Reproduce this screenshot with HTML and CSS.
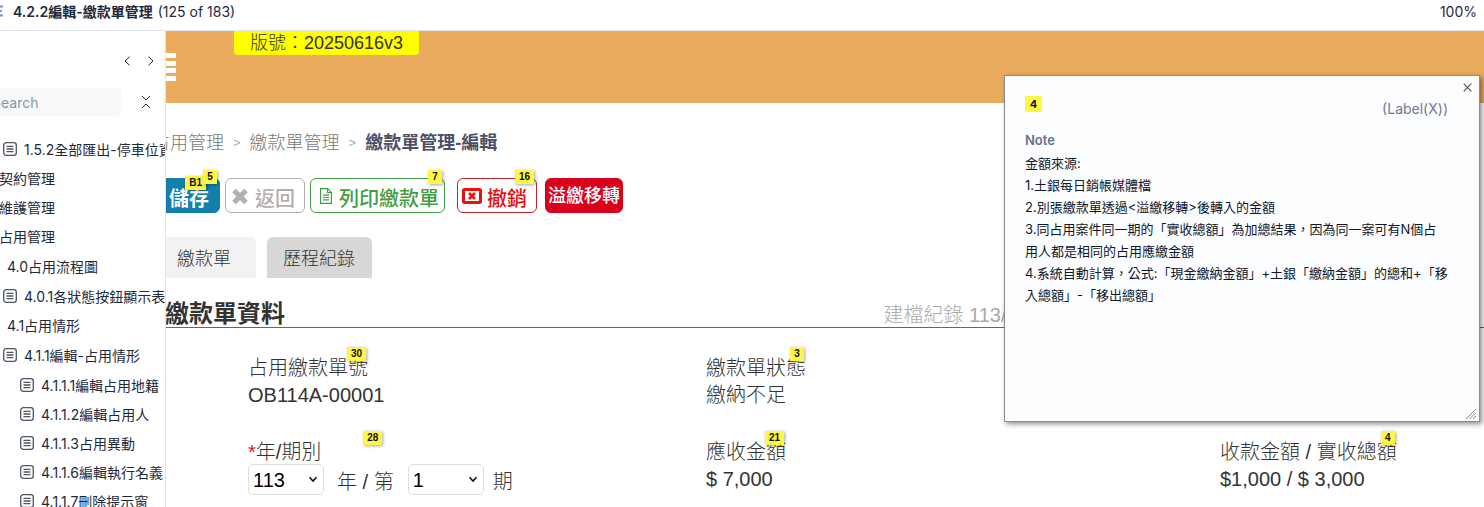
FILE: index.html
```html
<!DOCTYPE html>
<html lang="zh-Hant">
<head>
<meta charset="utf-8">
<title>4.2.2編輯-繳款單管理</title>
<link rel="stylesheet" href="styles.css">
</head>
<body>
<svg class="defs" aria-hidden="true">
  <symbol id="page" viewBox="0 0 14 14"><rect x="0.7" y="0.7" width="12.6" height="12.6" rx="2.6"/><path d="M3.5 4.4h7M3.5 7h7M3.5 9.6h7"/></symbol>
</svg>
<header class="topbar">
  <svg class="menu-mark" viewBox="0 0 12 12" aria-hidden="true"><path d="M0 1.5h12M0 6h11M0 10.5h12"/></svg>
  <h1 class="doc-title">4.2.2編輯-繳款單管理</h1>
  <span class="doc-count">(125 of 183)</span>
  <span class="zoom-level">100%</span>
</header>
<div class="workspace">
  <nav class="sidebar" aria-label="Pages">
    <div class="pager">
      <button class="icon-btn" aria-label="Previous"><svg width="8" height="10" viewBox="0 0 8 10"><path d="M6.5 0.7 2 5l4.500 4.300"/></svg></button>
      <button class="icon-btn" aria-label="Next"><svg width="8" height="10" viewBox="0 0 8 10"><path d="M1.500 0.700 6 5 1.500 9.300"/></svg></button>
    </div>
    <div class="search-row">
      <input class="search" type="text" placeholder="Search" aria-label="Search">
      <button class="icon-btn" aria-label="Collapse all"><svg width="10" height="14" viewBox="0 0 10 14"><path d="M1 1l4 4 4-4M1 13l4-4 4 4"/></svg></button>
    </div>
    <ul class="tree">
      <li><a class="node with-icon" href="#"><svg><use href="#page"/></svg>1.5.2全部匯出-停車位資料</a></li>
      <li><a class="node root" href="#">契約管理</a></li>
      <li><a class="node root" href="#">維護管理</a></li>
      <li><a class="node root" href="#">占用管理</a>
        <ul>
          <li><a class="node" href="#">4.0占用流程圖</a>
            <ul><li><a class="node with-icon" href="#"><svg><use href="#page"/></svg>4.0.1各狀態按鈕顯示表</a></li></ul>
          </li>
          <li><a class="node" href="#">4.1占用情形</a>
            <ul>
              <li><a class="node with-icon" href="#"><svg><use href="#page"/></svg>4.1.1編輯-占用情形</a>
                <ul class="deep">
                  <li><a class="node with-icon" href="#"><svg><use href="#page"/></svg>4.1.1.1編輯占用地籍</a></li>
                  <li><a class="node with-icon" href="#"><svg><use href="#page"/></svg>4.1.1.2編輯占用人</a></li>
                  <li><a class="node with-icon" href="#"><svg><use href="#page"/></svg>4.1.1.3占用異動</a></li>
                  <li><a class="node with-icon" href="#"><svg><use href="#page"/></svg>4.1.1.6編輯執行名義</a></li>
                  <li><a class="node with-icon" href="#"><svg><use href="#page"/></svg>4.1.1.7刪除提示窗</a></li>
                </ul>
              </li>
            </ul>
          </li>
        </ul>
      </li>
    </ul>
  </nav>
  <main class="canvas">
    <div class="banner">
      <svg class="burger" viewBox="0 0 30 28" aria-hidden="true"><path d="M0 2.500h30M0 10.500h30M0 17.500h30M0 25.500h30"/></svg>
      <span class="version">版號：20250616v3</span>
    </div>
    <nav class="crumbs" aria-label="Breadcrumb">
      <a href="#">占用管理</a><span class="sep">&gt;</span><a href="#">繳款單管理</a><span class="sep">&gt;</span><strong>繳款單管理-編輯</strong>
    </nav>
    <div class="actions">
      <div class="group">
        <button class="btn save">儲存<span class="tag tag-b1">B1</span><span class="tag tag-top">5</span></button>
        <button class="btn back"><svg width="18" height="17" viewBox="0 0 18 17"><path d="M3 2.500l12 12M15 2.500l-12 12" stroke="currentColor" stroke-width="5"/></svg>返回</button>
        <button class="btn print"><svg width="12" height="16" viewBox="0 0 12 16"><path d="M0.600 0.600h7l3.800 3.800v11H0.600zM7.500 0.600v4h4M3 7.200h6M3 9.500h6M3 11.800h6" fill="none" stroke="currentColor" stroke-width="1.200"/></svg>列印繳款單<span class="tag tag-top">7</span></button>
      </div>
      <div class="group wide">
        <button class="btn cancel"><svg width="20" height="16" viewBox="0 0 20 16"><rect x="1.500" y="1.500" width="17" height="13" rx="1" fill="none" stroke="currentColor" stroke-width="3"/><path d="M7 5l6 6M13 5l-6 6" stroke="currentColor" stroke-width="2.600"/></svg>撤銷<span class="tag tag-top">16</span></button>
        <button class="btn transfer">溢繳移轉</button>
      </div>
    </div>
    <div class="tabs">
      <button class="tab active">繳款單</button>
      <button class="tab">歷程紀錄</button>
    </div>
    <div class="section-head">
      <h2>繳款單資料</h2>
      <span class="record">建檔紀錄 113/</span>
    </div>
    <div class="fields">
      <div class="field"><span class="label">占用繳款單號<span class="tag tag-label">30</span></span><span class="value">OB114A-00001</span></div>
      <div class="field"><span class="label">繳款單狀態<span class="tag tag-label">3</span></span><span class="value">繳納不足</span></div>
      <div class="field"></div>
      <div class="field">
        <label class="label" for="year"><span class="required">*</span>年/期別<span class="tag tag-far">28</span></label>
        <div class="period">
          <select id="year"><option>113</option></select>
          <span>年 / 第</span>
          <select id="term" aria-label="期"><option>1</option></select>
          <span>期</span>
        </div>
      </div>
      <div class="field"><span class="label">應收金額<span class="tag tag-label">21</span></span><span class="value">$ 7,000</span></div>
      <div class="field"><span class="label">收款金額 / 實收總額<span class="tag tag-label">4</span></span><span class="value">$1,000 / $ 3,000</span></div>
    </div>
  </main>
</div>
<aside class="note" aria-label="Note">
  <button class="note-close" aria-label="Close"><svg width="9" height="9" viewBox="0 0 9 9"><path d="M0.700 0.700l7.600 7.600M8.300 0.700 0.700 8.300"/></svg></button>
  <div class="note-head"><span class="note-num">4</span><span class="note-kind">(Label(X))</span></div>
  <h3>Note</h3>
  <p>金額來源:</p>
  <p>1.土銀每日銷帳媒體檔</p>
  <p>2.別張繳款單透過&lt;溢繳移轉&gt;後轉入的金額</p>
  <p>3.同占用案件同一期的「實收總額」為加總結果，因為同一案可有N個占<br>用人都是相同的占用應繳金額</p>
  <p>4.系統自動計算，公式:「現金繳納金額」+土銀「繳納金額」的總和+「移<br>入總額」-「移出總額」</p>
  <svg class="grip" width="10" height="10" viewBox="0 0 10 10" aria-hidden="true"><path d="M0 10 10 0M3.500 10 10 3.500M7 10l3-3"/></svg>
</aside>
</body>
</html>
```

FILE: styles.css
```css
* { box-sizing: border-box; }
html, body { height: 100%; }
body {
  margin: 0;
  display: flex;
  flex-direction: column;
  overflow: hidden;
  position: relative;
  background: #fff;
  color: #1e293b;
  font-family: Inter, "Noto Sans CJK TC", sans-serif;
  font-size: 14px;
}
button { font-family: inherit; border: 0; background: none; padding: 0; margin: 0; }
a { color: inherit; text-decoration: none; }
ul { list-style: none; margin: 0; padding: 0; }
.defs { position: absolute; width: 0; height: 0; }

.topbar {
  display: flex;
  align-items: center;
  gap: 5px;
  height: 31px;
  flex: none;
  padding: 0 7px 8px 0;
  border-bottom: 1px solid #dfe5ec;
  white-space: nowrap;
}
.menu-mark { width: 12px; height: 12px; margin: 0 5px 0 -9px; fill: none; stroke: #6b94e0; stroke-width: 2; }
.doc-title { margin: 0; font-size: 14px; font-weight: 600; }
.zoom-level { margin-left: auto; }

.workspace { display: flex; flex: 1; min-height: 0; }
.sidebar { width: 166px; flex: none; overflow: hidden; border-right: 1px solid #dfe3ea; }
.pager { display: flex; justify-content: flex-end; gap: 16px; padding: 25px 10px 22px 0; }
.icon-btn { display: flex; }
.icon-btn svg { fill: none; stroke: #1e293b; stroke-width: 1; }
.search-row { display: flex; align-items: center; gap: 20px; margin-left: -20px; }
.search {
  width: 141px;
  height: 28px;
  border: 0;
  border-radius: 4px;
  padding: 0 12px;
  background: #f7f9fb;
  font: 14px Inter, sans-serif;
}
.search::placeholder { color: #8c939d; }
.tree { padding-top: 18px; }
.tree ul { padding-top: 1px; }
.tree .deep { padding-left: 17px; }
.node { display: flex; align-items: center; gap: 7px; height: 29px; padding-left: 7px; white-space: nowrap; }
.node.root { padding-left: 0; margin-left: -1px; }
.node.with-icon { padding-left: 3px; }
.node svg { width: 14px; height: 14px; flex: none; fill: none; stroke: #4b5563; stroke-width: 1.3; }

.canvas {
  flex: 1;
  min-width: 0;
  overflow: hidden;
  color: #333;
  font-family: "Liberation Sans", "Noto Sans CJK TC", sans-serif;
  font-size: 20px;
  font-weight: 300;
}
.banner { display: flex; align-items: flex-start; gap: 58px; height: 72px; background: #eaab5e; }
.burger { width: 30px; height: 28px; margin: 22px 0 0 -20px; fill: none; stroke: #fff; stroke-width: 5; }
.version { padding: 0 16px; border-radius: 0 0 4px 4px; background: #ff0; font-size: 18px; line-height: 24px; }

.crumbs { display: flex; align-items: center; margin: 27px 0 0 -14px; font-size: 18px; line-height: 26px; color: #777; white-space: nowrap; }
.crumbs .sep { margin: 0 9px; font-size: 13px; color: #aaa; }
.crumbs strong { font-weight: 700; color: #4a5068; }

.actions { display: flex; gap: 12px; margin-top: 22px; }
.group { display: flex; gap: 5px; }
.group.wide { gap: 8px; }
.btn {
  position: relative;
  display: flex;
  gap: 7px;
  height: 35px;
  padding: 6px 10px 0 6px;
  border: 1px solid currentColor;
  border-radius: 6px;
  font-size: 20px;
  font-weight: 500;
  line-height: 28px;
  white-space: nowrap;
}
.btn svg { margin-top: 3px; }
.save { margin-left: -8px; padding: 6px 10px 0; border-color: #137fac; background: #137fac; color: #fff; font-weight: 700; }
.back { padding: 6px 9px 0 5px; gap: 6px; color: #b5aeae; }
.print { padding: 6px 5px 0 9px; color: #3f9c47; }
.cancel { padding: 6px 9px 0 4px; gap: 5px; border-color: #c9222b; color: #ea0f0f; }
.cancel svg, .back svg, .print svg { flex: none; }
.transfer { align-items: center; padding: 0 2px; border-color: #d9001b; background: #d9001b; color: #fff; font-size: 18px; }

.tag {
  position: absolute;
  min-width: 14px;
  height: 14px;
  padding: 0 4px;
  background: #fff647;
  box-shadow: 1px 1px 3px rgba(0, 0, 0, 0.35);
  color: #111;
  font: bold 10px/14px "Liberation Sans", sans-serif;
  text-align: center;
}
.tag-top { top: -9px; right: 2px; }
.tag-b1 { top: -3px; right: 13px; }
.tag-label { top: -8px; right: 2px; }
.tag-far { top: -8px; right: -61px; }

.tabs { display: flex; gap: 11px; margin-top: 24px; }
.tab { height: 41px; padding: 0 17px 2px 16px; border-radius: 6px 6px 0 0; background: #d7d7d7; color: #333; font-size: 18px; font-weight: 300; }
.tab.active { padding: 0 25px 2px 11px; border-top-left-radius: 0; background: #f2f2f2; }

.section-head { display: flex; align-items: flex-end; margin-top: 23px; border-bottom: 1px solid #666; }
.section-head h2 { flex: 718; margin: 0 0 0 -1px; font-size: 24px; line-height: 26px; }
.record { flex: 600; color: #aaa; line-height: 23px; white-space: nowrap; }

.fields { display: grid; grid-template-columns: 458fr 514fr 264fr; row-gap: 30px; margin-top: 27px; padding-left: 82px; line-height: 27px; }
.field { display: flex; flex-direction: column; align-items: flex-start; white-space: nowrap; min-width: 0; }
.label { position: relative; }
.required { color: #e02020; }
.period { display: flex; align-items: center; height: 27px; }
.period span { margin: 6px 14px 0 13px; }
.period span:last-child { margin-left: 9px; }
.period select {
  width: 76px;
  height: 31px;
  padding: 0 4px;
  border: 1px solid #ddd;
  border-radius: 5px;
  appearance: none;
  background: #fff url("data:image/svg+xml,%3Csvg xmlns='http://www.w3.org/2000/svg' width='10' height='7' fill='none' stroke='%23111' stroke-width='1.6'%3E%3Cpath d='M1.500 1.200 5 5l3.500-3.800'/%3E%3C/svg%3E") no-repeat right 5px center;
  color: #000;
  font: 20px "Liberation Sans", sans-serif;
}

.note {
  position: absolute;
  top: 75px;
  right: 4px;
  width: 476px;
  min-height: 347px;
  padding: 20px 31px 20px 20px;
  border: 1px solid #8a8d92;
  background: #fcfdff;
  box-shadow: 2px 2px 5px rgba(0, 0, 0, 0.45);
  color: #0f172a;
  font-size: 13px;
  line-height: 22px;
  white-space: nowrap;
}
.note-close { position: absolute; top: 7px; right: 7px; display: flex; }
.note-close svg { fill: none; stroke: #555; stroke-width: 1.2; }
.note-head { display: flex; justify-content: space-between; align-items: flex-start; }
.note-num { width: 17px; background: #fff647; font-size: 11px; font-weight: 700; line-height: 16px; text-align: center; }
.note-kind { margin-top: 2px; font-size: 14px; color: #6b7a90; }
.note h3 { margin: 9px 0 1px; font-size: 13px; font-weight: 600; color: #64748b; }
.note p { margin: 0; }
.grip { position: absolute; right: 3px; bottom: 2px; fill: none; stroke: #888; stroke-width: 1; }
```
